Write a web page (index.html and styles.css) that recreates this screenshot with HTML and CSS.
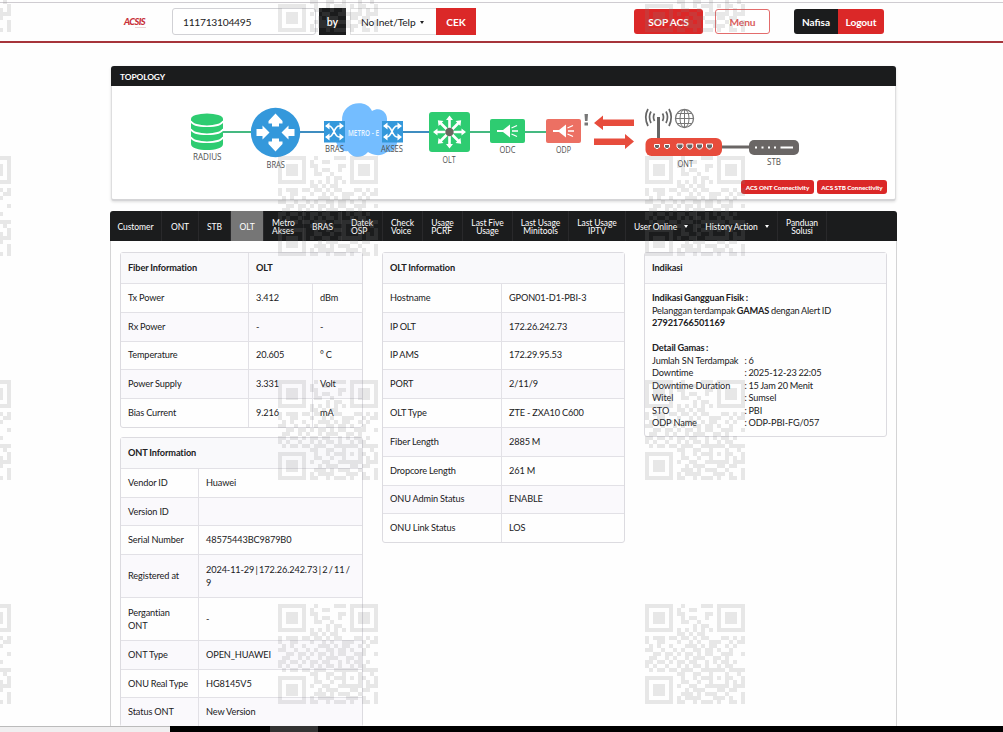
FILE: index.html
```html
<!DOCTYPE html>
<html lang="id">
  <head>
    <meta charset="UTF-8" />
    <meta name="viewport" content="width=device-width, initial-scale=1.0" />
    <link rel="stylesheet" href="styles.css">
    <title>ACSIS</title>
  </head>
  <body>
    <header class="topbar">
      <div class="logo">ACSIS<span></span></div>
      <form class="search">
        <input class="search-input" type="text" value="111713104495" />
        <span class="by">by</span>
        <span class="dropdown">No Inet/Telp <i class="caret"></i></span>
        <button class="btn cek" type="button">CEK</button>
      </form>
      <button class="btn sop" type="button">SOP ACS</button>
      <button class="btn outline" type="button">Menu</button>
      <div class="user"><span class="name">Nafisa</span><button class="btn logout" type="button">Logout</button></div>
    </header>

    <main class="page">
      <section class="topology">
        <h2>TOPOLOGY</h2>
        <svg class="diagram" viewBox="112 86 783 94" width="783" height="94">
          <defs>
            <g id="shuffle" fill="none" stroke="#fff" stroke-width="1.700">
              <path d="M2 5H5C10 5 10 16 15 16H18M2 16H5C10 16 10 5 15 5H18" />
              <path fill="#fff" stroke="none" d="M15.500 1.500L20 5L15.500 8.500ZM15.500 12.500L20 16L15.500 19.500ZM5.500 1.500L1 5L5.500 8.500ZM5.500 12.500L1 16L5.500 19.500Z" />
            </g>
            <g id="horn" fill="#fff">
              <path d="M7 11H13L20 5.500V18.500L13 13H7Z" />
              <path d="M21.500 9L27 6.500M22 12H28M21.500 15L27 17.500" stroke="#fff" stroke-width="1.300" />
            </g>
          </defs>
          <g stroke-width="2">
            <path d="M222 132H252" stroke="#45b981" />
            <path d="M300 132H325M402 132H430" stroke="#3f8dc0" />
            <path d="M469 132H491M524 132H547" stroke="#45b981" />
            <path d="M721 147H750" stroke="#6a6665" stroke-width="3" />
          </g>
          <!-- radius -->
          <path fill="#2ecc71" d="M191 119V144C191 152 223 152 223 144V119Z" />
          <ellipse cx="207" cy="119" rx="16" ry="5.500" fill="#2ecc71" />
          <path d="M191 121C193 128 221 128 223 121M191 129C193 136 221 136 223 129M191 137C193 144 221 144 223 137" fill="none" stroke="#fff" stroke-width="1.700" />
          <!-- bras -->
          <circle cx="275.500" cy="132.500" r="24.700" fill="#3498db" />
          <g fill="#fff" transform="translate(275.500 132.500)">
            <path d="M0-19L7-11.500V-9H3.500V-6H-3.500V-9H-7V-11.500Z" />
            <path d="M0 19L7 11.500V9H3.500V6H-3.500V9H-7V11.500Z" />
            <path d="M-6 0L-13-7V-3.500H-19V3.500H-13V7Z" />
            <path d="M6 0L13-7V-3.500H19V3.500H13V7Z" />
          </g>
          <!-- metro ethernet cloud -->
          <path fill="#74bdff" d="M342 121C341 101 367 98 372 111C380 106 388 112 387 121C401 124 401 154 387 152C379 158 371 154 368 152C361 160 351 157 348 151C335 154 329 125 342 121Z" />
          <rect x="324" y="121" width="21" height="21.500" fill="#3498db" />
          <rect x="382" y="121" width="21" height="21.500" fill="#3498db" />
          <use href="#shuffle" x="324" y="121" />
          <use href="#shuffle" x="382" y="121" />
          <!-- olt -->
          <rect x="429" y="112" width="41" height="40" rx="3" fill="#2ecc71" />
          <g fill="#fff" transform="translate(449.500 132)">
            <g id="spokes">
              <path d="M0-16.500L3.500-12H1.300V0H-1.300V-12H-3.500Z" />
              <path d="M0-16.500L3.500-12H1.300V0H-1.300V-12H-3.500Z" transform="rotate(90)" />
              <path d="M0-16.500L3.500-12H1.300V0H-1.300V-12H-3.500Z" transform="rotate(180)" />
              <path d="M0-16.500L3.500-12H1.300V0H-1.300V-12H-3.500Z" transform="rotate(270)" />
            </g>
            <use href="#spokes" transform="rotate(45)" />
            <circle r="4.200" fill="#6a665f" />
          </g>
          <!-- odc and odp -->
          <rect x="490" y="119" width="35" height="24" rx="2" fill="#2ecc71" />
          <use href="#horn" x="490" y="119" />
          <rect x="546" y="119" width="35" height="24" rx="2" fill="#ec7063" />
          <use href="#horn" x="546" y="119" />
          <path d="M584.500 114H588L587.500 121H585ZM584.500 122.500H588V125.500H584.500Z" fill="#777" />
          <path d="M594 123L603 115.500V119.500H634V126H603V130ZM634 141.500L625 134V138.500H594V145H625V149Z" fill="#e74c3c" />
          <!-- ont -->
          <g fill="none" stroke="#666" stroke-width="1.700">
            <path d="M658.500 117V138" stroke-width="3" />
            <path d="M654.500 113.500Q652.500 117 654.500 121M651 111.500Q648 117 651 123M648 109Q643.500 117 648 126M662.500 113.500Q664.500 117 662.500 121M666 111.500Q669 117 666 123M669 109Q673.500 117 669 126" />
          </g>
          <g fill="none" stroke="#777" stroke-width="1">
            <circle cx="684.500" cy="118.500" r="9" stroke-width="1.300" />
            <ellipse cx="684.500" cy="118.500" rx="4.500" ry="9" />
            <path d="M684.500 109.500V127.500M675.500 118.500H693.500M677 113.500H692M677 123.500H692" />
          </g>
          <rect x="645.500" y="138" width="76.500" height="18" rx="6" fill="#e74c3c" />
          <g fill="#666" stroke="#fff" stroke-width="1">
            <path d="M654.500 144.500H659.500V147L658 148.500H656L654.500 147ZM664.500 144.500H669.500V147L668 148.500H666L664.500 147Z" />
            <path d="M677 144H683V147L681 149H679L677 147ZM686.800 144H692.800V147L690.800 149H688.800L686.800 147ZM696.500 144H702.500V147L700.500 149H698.500L696.500 147ZM706.500 144H712.500V147L710.500 149H708.500L706.500 147Z" />
          </g>
          <!-- stb -->
          <rect x="749" y="140" width="50" height="15" rx="5" fill="#6a6665" />
          <path d="M755 147.500H757M761.500 147.500H763.500M768 147.500H770M774 147.500H776M780.500 147.500H793" stroke="#fff" stroke-width="2" />
          <g class="labels">
            <text x="193" y="159.500" textLength="28.500" lengthAdjust="spacingAndGlyphs">RADIUS</text>
            <text x="266.500" y="168" textLength="18.500" lengthAdjust="spacingAndGlyphs">BRAS</text>
            <text x="325" y="151.500" textLength="19" lengthAdjust="spacingAndGlyphs">BRAS</text>
            <text x="381" y="151.500" textLength="22" lengthAdjust="spacingAndGlyphs">AKSES</text>
            <text x="442.500" y="162.500" textLength="13" lengthAdjust="spacingAndGlyphs">OLT</text>
            <text x="499.500" y="152.500" textLength="16" lengthAdjust="spacingAndGlyphs">ODC</text>
            <text x="556" y="152.500" textLength="15" lengthAdjust="spacingAndGlyphs">ODP</text>
            <text x="677.500" y="167" textLength="15.500" lengthAdjust="spacingAndGlyphs">ONT</text>
            <text x="767" y="164.500" textLength="14" lengthAdjust="spacingAndGlyphs">STB</text>
            <text class="metro" x="348" y="136" textLength="31" lengthAdjust="spacingAndGlyphs">METRO - E</text>
          </g>
        </svg>
        <div class="connectivity">
          <button class="btn mini ont" type="button">ACS ONT Connectivity</button>
          <button class="btn mini stb" type="button">ACS STB Connectivity</button>
        </div>
      </section>

      <nav class="tabs">
        <a>Customer</a>
        <a>ONT</a>
        <a>STB</a>
        <a class="active">OLT</a>
        <a>Metro<br>Akses</a>
        <a>BRAS</a>
        <a>Datek<br>OSP</a>
        <a>Check<br>Voice</a>
        <a>Usage<br>PCRF</a>
        <a class="center">Last Five<br>Usage</a>
        <a class="center">Last Usage<br>Minitools</a>
        <a class="center">Last Usage<br>IPTV</a>
        <a>User Online <i class="caret"></i></a>
        <a>History Action <i class="caret"></i></a>
        <a class="center">Panduan<br>Solusi</a>
      </nav>

      <section class="content">
        <div class="column">
          <table class="fiber">
            <colgroup><col class="w128"><col class="w64"><col></colgroup>
            <tr><th>Fiber Information</th><th colspan="2">OLT</th></tr>
            <tr><td>Tx Power</td><td>3.412</td><td>dBm</td></tr>
            <tr><td>Rx Power</td><td>-</td><td>-</td></tr>
            <tr><td>Temperature</td><td>20.605</td><td>° C</td></tr>
            <tr><td>Power Supply</td><td>3.331</td><td>Volt</td></tr>
            <tr><td>Bias Current</td><td>9.216</td><td>mA</td></tr>
          </table>
          <table class="ont-info">
            <colgroup><col class="w78"><col></colgroup>
            <tr><th colspan="2">ONT Information</th></tr>
            <tr><td>Vendor ID</td><td>Huawei</td></tr>
            <tr><td>Version ID</td><td></td></tr>
            <tr><td>Serial Number</td><td>48575443BC9879B0</td></tr>
            <tr class="tall"><td>Registered at</td><td class="registered">2024-11-29 | 172.26.242.73 | 2 / 11 /<br>9</td></tr>
            <tr class="tall"><td>Pergantian<br>ONT</td><td>-</td></tr>
            <tr><td>ONT Type</td><td>OPEN_HUAWEI</td></tr>
            <tr><td>ONU Real Type</td><td>HG8145V5</td></tr>
            <tr><td>Status ONT</td><td>New Version</td></tr>
          </table>
        </div>

        <div class="column">
          <table>
            <colgroup><col class="w119"><col></colgroup>
            <tr><th colspan="2">OLT Information</th></tr>
            <tr><td>Hostname</td><td>GPON01-D1-PBI-3</td></tr>
            <tr><td>IP OLT</td><td>172.26.242.73</td></tr>
            <tr><td>IP AMS</td><td>172.29.95.53</td></tr>
            <tr><td>PORT</td><td>2/11/9</td></tr>
            <tr><td>OLT Type</td><td>ZTE - ZXA10 C600</td></tr>
            <tr><td>Fiber Length</td><td>2885 M</td></tr>
            <tr><td>Dropcore Length</td><td>261 M</td></tr>
            <tr><td>ONU Admin Status</td><td>ENABLE</td></tr>
            <tr><td>ONU Link Status</td><td>LOS</td></tr>
          </table>
        </div>

        <div class="column">
          <div class="indikasi">
            <h3>Indikasi</h3>
            <div class="indikasi-body">
              <b>Indikasi Gangguan Fisik :</b>
              <p>Pelanggan terdampak <b>GAMAS</b> dengan Alert ID</p>
              <b class="alert-id">27921766501169</b>
              <b class="detail">Detail Gamas :</b>
              <dl>
                <dt>Jumlah SN Terdampak</dt><dd>: 6</dd>
                <dt>Downtime</dt><dd>: 2025-12-23 22:05</dd>
                <dt>Downtime Duration</dt><dd>: 15 Jam 20 Menit</dd>
                <dt>Witel</dt><dd>: Sumsel</dd>
                <dt>STO</dt><dd>: PBI</dd>
                <dt>ODP Name</dt><dd>: ODP-PBI-FG/057</dd>
              </dl>
            </div>
          </div>
        </div>
      </section>
    </main>

    <footer class="bottombar"><span class="status"></span><span class="thumb"></span></footer>

    <svg class="watermark" width="1003" height="732">
      <defs>
        <pattern id="qr" x="278" y="156" width="367" height="224" patternUnits="userSpaceOnUse">
          <path id="modules" transform="scale(4)" />
        </pattern>
      </defs>
      <rect width="1003" height="726" fill="url(#qr)" />
    </svg>

    <script>
      // watermark modules, one string per row
      const rows = [
        "1111111001000011101111111",
        "1000001010011000001000001",
        "1011101011000001101011101",
        "1011101001011001001011101",
        "1011101001100100001011101",
        "1000001000001011001000001",
        "1111111010101010101111111",
        "0000000011010110000000000",
        "1011101101101011000110101",
        "1001100010010100111001011",
        "0101001000111010110010100",
        "1100100101001101101001000",
        "0011011010110101100111001",
        "0110010100101110011010000",
        "1101101011011001010110100",
        "1010010010101101001011000",
        "0101101101110011111101111",
        "0000000011001100100010010",
        "1111111001001011101011001",
        "1000001001100100100010101",
        "1011101010011001111110111",
        "1011101000101110001101100",
        "1011101001110101110010001",
        "1000001010111100011101001",
        "1111111011001011101001101"
      ];
      let d = "";
      rows.forEach((row, y) => {
        for (const run of row.matchAll(/1+/g)) {
          d += `M${run.index} ${y}h${run[0].length}v1h-${run[0].length}z`;
        }
      });
      document.getElementById("modules").setAttribute("d", d);
    </script>
  </body>
</html>
```
FILE: styles.css
```css
* {
  box-sizing: border-box;
}

body {
  margin: 0;
  height: 732px;
  overflow: hidden;
  display: flex;
  flex-direction: column;
  background: #fefefe;
  color: #202022;
  font-family: Lato, sans-serif;
  font-size: 9.2px;
}

.topbar {
  display: flex;
  flex: none;
  height: 41px;
  margin-top: 2px;
  padding: 6px 0 0 124px;
  border-top: 1px solid #cfccd1;
  border-bottom: 2px solid #a6343a;
}

.logo {
  width: 48px;
  padding-top: 8px;
  color: #c8303a;
  font-size: 9.3px;
  line-height: 10px;
  font-weight: 900;
  font-style: italic;
  letter-spacing: -0.6px;
}

.logo span {
  display: block;
  width: 11px;
  height: 1px;
  margin-left: 11px;
  background: #ead5d7;
}

.search {
  display: flex;
  width: 304px;
  height: 27px;
  margin-top: -1px;
}

.search-input {
  width: 144px;
  height: 27px;
  padding: 1px 10px 0;
  border: 1px solid #d1d1d5;
  border-radius: 3px;
  background: #fff;
  color: #222;
  font: 10.3px Lato, sans-serif;
  letter-spacing: -0.3px;
}

.by {
  width: 27px;
  margin: 0 4px 0 3px;
  background: #1b1c1d;
  color: #fff;
  font-size: 10.5px;
  font-weight: bold;
  line-height: 28px;
  text-align: center;
}

.dropdown {
  width: 86px;
  padding-left: 10px;
  border: 1px solid #dededf;
  border-right: 0;
  font-size: 10.2px;
  line-height: 27px;
  word-spacing: -0.6px;
  letter-spacing: -0.1px;
  white-space: nowrap;
}

.caret {
  display: inline-block;
  margin-left: 3px;
  vertical-align: 2px;
  border: 2.5px solid transparent;
  border-top: 3px solid currentColor;
  border-bottom: 0;
}

.btn {
  padding: 0;
  border: 0;
  border-radius: 3px;
  background: #db2828;
  color: #fff;
  font: bold 10.2px Lato, sans-serif;
  letter-spacing: -0.1px;
  white-space: nowrap;
}

.cek {
  width: 40px;
  border-radius: 0;
}

.sop {
  width: 69px;
  height: 25px;
  margin-left: 158px;
}

.outline {
  width: 55px;
  height: 25px;
  margin-left: 12px;
  border: 1px solid #e36c6c;
  background: #fff;
  color: #d95c5c;
}

.user {
  display: flex;
  height: 25px;
  margin-left: 24px;
}

.name {
  width: 44px;
  border-radius: 3px 0 0 3px;
  background: #1b1c1d;
  color: #fff;
  font-weight: bold;
  font-size: 10px;
  line-height: 26px;
  text-align: center;
}

.logout {
  width: 46px;
  border-radius: 0 3px 3px 0;
}

.page {
  flex: 1;
  min-height: 0;
  overflow: hidden;
  width: 791px;
  margin-left: 108px;
  padding: 23px 2px 0;
}

.topology {
  width: 785px;
  height: 135px;
  margin-left: 1px;
  border: 1px solid #dededf;
  border-top: 0;
  border-bottom: 2px solid #d5d5d7;
  border-radius: 3px;
  background: #fff;
  box-shadow: 0 1px 3px #ddd;
}

.topology h2 {
  height: 20px;
  margin: 0 -1px;
  padding-left: 9px;
  border-radius: 3px 3px 0 0;
  background: #1b1c1d;
  color: #fff;
  font-size: 8.4px;
  line-height: 22px;
  letter-spacing: -0.1px;
}

.diagram {
  display: block;
}

.labels {
  fill: #505050;
  font-family: "Open Sans", sans-serif;
  font-size: 9px;
}

.labels .metro {
  fill: #e9f5ff;
  font-weight: 600;
}

.connectivity {
  display: flex;
  gap: 3px;
  justify-content: flex-end;
  padding-right: 8px;
}

.mini {
  height: 14px;
  font-size: 6.3px;
  font-weight: 900;
  letter-spacing: -0.05px;
}

.mini.ont {
  width: 73px;
}

.mini.stb {
  width: 70px;
}

.tabs {
  display: grid;
  grid-template-columns: 52px 37px 32px 33px 40px 38px 41px 40px 40px 50px 56px 57px 71px 81px 49px;
  width: 787px;
  height: 30px;
  margin-top: 10px;
  border-radius: 3px 3px 0 0;
  background: #1b1c1d;
}

.tabs a {
  display: flex;
  align-items: center;
  justify-content: center;
  padding-top: 1px;
  border-right: 1px solid #29292b;
  color: #fff;
  font-size: 8.5px;
  line-height: 8px;
  letter-spacing: -0.05px;
  word-spacing: -0.3px;
  white-space: nowrap;
}

.tabs .active {
  background: #767676;
}

.tabs .center {
  text-align: center;
}

.tabs .caret {
  margin-left: 7px;
}

.content {
  display: grid;
  grid-template-columns: 243px 243px 243px;
  gap: 19px;
  width: 787px;
  height: 500px;
  padding: 11px 9px 0;
  border: 1px solid #d4d4d5;
  border-top: 0;
  letter-spacing: -0.12px;
  word-spacing: -0.2px;
}

table {
  table-layout: fixed;
  width: 243px;
  margin-bottom: 9px;
  border: 1px solid #dcdbe0;
  border-radius: 3px;
  border-spacing: 0;
}

th,
td {
  height: 28.8px;
  padding: 0 7px;
  border-top: 1px solid #e2e1e6;
  border-left: 1px solid #e2e1e6;
  line-height: 14px;
  text-align: left;
  white-space: nowrap;
}

th {
  height: 30px;
  border-top: 0;
  background: #f9f9fb;
  font-weight: bold;
}

th:first-child,
td:first-child {
  border-left: 0;
}

tr:nth-child(odd) td {
  background: #faf9fc;
}

.ont-info td {
  height: 28.7px;
}

.ont-info .tall td {
  height: 43px;
  line-height: 13.5px;
}

.ont-info .registered {
  word-spacing: -0.9px;
}

.w128 {
  width: 127px;
}

.w64 {
  width: 64px;
}

.w78 {
  width: 77px;
}

.w119 {
  width: 118px;
}

.indikasi {
  height: 185px;
  border: 1px solid #dcdbe0;
  border-radius: 3px;
}

.indikasi h3 {
  height: 31px;
  margin: 0;
  padding-left: 7px;
  border-bottom: 1px solid #e2e1e6;
  background: #f9f9fb;
  font-size: 9.2px;
  line-height: 30px;
}

.indikasi-body {
  padding: 8px 7px;
  line-height: 12.5px;
  word-spacing: -0.5px;
}

.indikasi-body p {
  margin: 0;
  letter-spacing: -0.15px;
}

.alert-id,
.detail {
  display: block;
}

.detail {
  margin-top: 12.5px;
}

dl {
  display: grid;
  grid-template-columns: 92.5px 1fr;
  margin: 0;
}

dt {
  word-spacing: 0;
}

dd {
  margin: 0;
}

.bottombar {
  display: flex;
  flex: none;
  height: 6px;
  background: #000;
}

.status {
  width: 170px;
  border-top: 1px solid #bbb;
  background: #f0eff0;
}

.thumb {
  width: 48px;
  margin-left: 100px;
  background: #333;
}

.watermark {
  position: absolute;
  top: 0;
  left: 0;
  fill: rgba(128, 128, 128, 0.18);
  pointer-events: none;
}
```
